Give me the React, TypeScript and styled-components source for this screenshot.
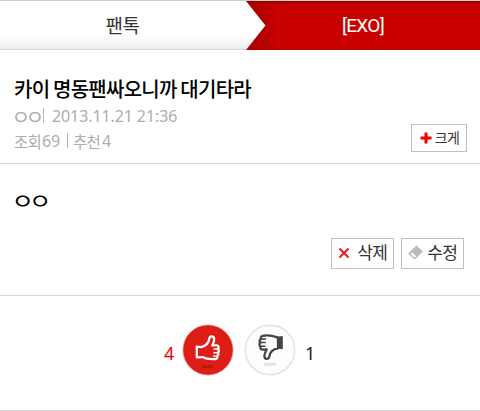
import styled, { createGlobalStyle } from 'styled-components';

const colors = {
  red: '#c90000',
  accent: '#f00000',
  text: '#333',
  muted: '#adadad',
  line: '#d6d6d6',
  border: '#c0c0c0',
};

const GlobalStyle = createGlobalStyle`
  * {
    box-sizing: border-box;
  }

  body {
    margin: 0;
    background: #fff;
    color: ${colors.text};
    font-family: 'Noto Sans', 'Noto Sans CJK KR', sans-serif;
  }
`;

const Page = styled.main`
  display: flex;
  flex-direction: column;
  width: 480px;
  height: 411px;
  overflow: hidden;
`;

const Tabs = styled.nav`
  position: relative;
  display: grid;
  grid-template-columns: 246px 1fr;
  height: 50px;
  border-top: 1px solid #cfcfcf;
  background: #fff;
`;

const Tab = styled.div<{ $active?: boolean }>`
  display: flex;
  align-items: center;
  justify-content: center;
  padding-bottom: ${({ $active }) => ($active ? '0' : '2px')};
  padding-right: ${({ $active }) => ($active ? '0' : '1px')};
  font-family: ${({ $active }) => ($active ? 'Roboto' : "'Noto Sans CJK KR'")}, sans-serif;
  font-size: 19px;
  letter-spacing: ${({ $active }) => ($active ? '-0.7px' : '-0.6px')};
  color: ${({ $active }) => ($active ? '#fff' : colors.text)};
  background: ${({ $active }) =>
    $active
      ? `linear-gradient(#8a0000, rgba(201, 0, 0, 0) 3px), linear-gradient(90deg, #a80000, ${colors.red} 34px)`
      : 'linear-gradient(#fff 70%, #eee)'};
  border-bottom: 1px solid ${({ $active }) => ($active ? '#b80000' : '#d4d8d8')};
`;

const Arrow = styled.svg`
  position: absolute;
  left: 245px;
  top: 0;
`;

const Head = styled.header`
  display: flex;
  justify-content: space-between;
  align-items: flex-end;
  height: 114px;
  padding: 0 13px 11px 14px;
  border-bottom: 1px solid ${colors.line};
`;

const Summary = styled.div`
  margin-bottom: -1px;
`;

const Title = styled.h1`
  margin: 0;
  font-family: 'Noto Sans CJK KR', sans-serif;
  font-size: 20px;
  font-weight: 500;
  line-height: 28px;
  letter-spacing: -0.75px;
  color: #000;
  white-space: nowrap;
`;

const Meta = styled.div`
  display: flex;
  align-items: center;
  height: 25px;
  font-size: 16px;
  letter-spacing: -0.1px;
  color: ${colors.muted};
  white-space: nowrap;
`;

const Label = styled.span<{ $gap?: number }>`
  margin-right: ${({ $gap = 0 }) => $gap}px;
  font-family: 'Noto Sans CJK KR', sans-serif;
  font-size: 15.5px;
  letter-spacing: -0.8px;
`;

// The jamo circles are drawn larger than the font's own
const Jamo = styled.span<{ $width: number }>`
  display: inline-block;
  width: ${({ $width }) => $width}px;
  transform: scale(1.28, 1.12);
  transform-origin: 0 58%;
  font-family: 'Noto Sans CJK KR', sans-serif;
  letter-spacing: -3.8px;
  text-indent: -2px;
  white-space: nowrap;
`;

const Bar = styled.i<{ $gap: string }>`
  width: 1px;
  height: 15px;
  margin: ${({ $gap }) => $gap};
  background: #b4b4b4;
`;

const Button = styled.button<{ $width: number; $small?: boolean }>`
  display: flex;
  align-items: center;
  justify-content: space-between;
  width: ${({ $width }) => $width}px;
  height: ${({ $small }) => ($small ? 28 : 31)}px;
  padding: ${({ $small }) => ($small ? '0 7px 1px 8px' : '0 6px 2px 6px')};
  border: 1px solid ${colors.border};
  background: #fff;
  color: ${colors.text};
  font-family: 'Noto Sans CJK KR', sans-serif;
  font-size: ${({ $small }) => ($small ? 14 : 17)}px;
  letter-spacing: -0.8px;
  line-height: 1;
  white-space: nowrap;
`;

const ButtonText = styled.span`
  margin-top: -2px;
`;

const Body = styled.article`
  display: flex;
  flex-direction: column;
  justify-content: space-between;
  height: 132px;
  padding: 21px 16px 26px 14px;
  border-bottom: 1px solid ${colors.line};
`;

const Content = styled.p`
  margin: 0;
  font-size: 19px;
  line-height: 30px;
  color: #000;
`;

const Actions = styled.div`
  display: flex;
  justify-content: flex-end;
  gap: 7px;
`;

const Votes = styled.section`
  display: flex;
  align-items: center;
  height: 115px;
  padding: 0 0 7px 164px;
  border-bottom: 1px solid ${colors.line};
`;

const Count = styled.span<{ $up?: boolean }>`
  width: ${({ $up }) => ($up ? 18 : 10)}px;
  margin-left: ${({ $up }) => ($up ? 0 : -1)}px;
  padding-top: 7px;
  font-size: 18px;
  color: ${({ $up }) => ($up ? colors.accent : '#222')};
`;

const VoteIcon = styled.svg`
  flex: none;
  width: 52px;
  height: 52px;
  margin-right: 10px;
`;

const PlusIcon = () => (
  <svg width="12" height="12" viewBox="0 0 12 12">
    <path d="M6 .5v11M.5 6h11" stroke="#f00000" strokeWidth="3" />
  </svg>
);

const CrossIcon = () => (
  <svg width="12" height="12" viewBox="0 0 12 12">
    <path d="M1.5 1.5l9 9M10.5 1.5l-9 9" stroke="#ee2020" strokeWidth="2.2" />
  </svg>
);

const EraserIcon = () => (
  <svg width="16" height="16" viewBox="0 0 16 16">
    <path d="M8.4.6l6.6 5.8-8.2 8.2L.2 8.6z" fill="#b9b9b9" />
    <path d="M4.2 7.4l3.9 3.8-1.5 1.5-3.8-3.8z" fill="#fff" />
  </svg>
);

const ThumbUp = () => (
  <VoteIcon viewBox="0 0 52 52">
    <circle cx="26" cy="26" r="25.2" fill="#dc1e17" stroke="#ecc4c2" strokeWidth=".8" />
    <path
      d="M14.8 22.6l4.5.6c4-1.2 7.6-4.5 8.1-8.8.4-2.9 4.4-2.6 4.8.4.3 2.8-1.2 4.8-1.8 6.5h4.4c2.2.2 2.5 2.9.7 3.7 1.8.6 1.8 3.2 0 3.7 1.5.8 1.1 3-.6 3.4 1 1.1.2 2.8-1.6 2.9-4.9.5-9 .3-12.8-1.9l-5.7.2z"
      fill="none"
      stroke="#fff"
      strokeWidth="2.3"
      strokeLinejoin="round"
    />
    <path d="M31.5 25h3.8M31.5 28.7h3.8M31 32.1h3.2" stroke="#fff" strokeWidth="1.4" />
    <rect x="20" y="41.5" width="11" height="2.5" rx="1" fill="#b91611" />
  </VoteIcon>
);

const ThumbDown = () => (
  <VoteIcon viewBox="0 0 52 52">
    <circle cx="26" cy="26" r="24.7" fill="#fdfdfd" stroke="#e1e2e1" strokeWidth="1.4" />
    <path
      d="M34 13.6c-5.2-1.9-10.8-2.9-15.2-1.8-2 .5-2.5 2.1-1.5 3.1-2 .5-2.3 2.8-.8 3.7-1.7.9-1.4 3.2.3 3.7-1 1.4-.2 3.4 1.8 3.3l4-.2c-.9 2.5-2.6 4.7-2.2 7.4.5 2.9 4.4 2.7 4.9-.2.8-4.6 4.4-7.7 8.7-8.2z"
      fill="none"
      stroke="#444"
      strokeWidth="2.3"
      strokeLinejoin="round"
    />
    <path d="M17.6 15h4.5M17 18.6h4.7M17.2 22.3h4.3" stroke="#444" strokeWidth="1.5" />
    <path d="M33 12.8l5.8-.8v13.2l-5.8-.8z" fill="#444" />
    <rect x="20" y="38.8" width="12" height="3" rx="1.5" fill="#e2e2e2" />
  </VoteIcon>
);

export default function App() {
  return (
    <>
      <GlobalStyle />
      <Page>
        <Tabs>
          <Tab>팬톡</Tab>
          <Tab $active>[EXO]</Tab>
          <Arrow width="24" height="49" viewBox="0 0 24 49">
            <defs>
              <linearGradient id="fold" x1="0" y1="0" x2="0" y2="1">
                <stop offset=".7" stopColor="#fff" />
                <stop offset="1" stopColor="#eee" />
              </linearGradient>
            </defs>
            <path d="M1 0l21 24.5L1 49z" fill="#8b0000" opacity=".7" />
            <path d="M0 0h1l19.5 24.5L1 49H0z" fill="url(#fold)" />
          </Arrow>
        </Tabs>
        <Head>
          <Summary>
            <Title>카이 명동팬싸오니까 대기타라</Title>
            <Meta>
              <Jamo $width={26}>ㅇㅇ</Jamo>
              <Bar $gap="0 8px 0 3px" />
              2013.11.21 21:36
            </Meta>
            <Meta>
              <Label $gap={1}>조회</Label>69
              <Bar $gap="0 5px 0 7px" />
              <Label $gap={2}>추천</Label>4
            </Meta>
          </Summary>
          <Button $width={56} $small>
            <PlusIcon />
            <ButtonText>크게</ButtonText>
          </Button>
        </Head>
        <Body>
          <Content>
            <Jamo $width={40}>ㅇㅇ</Jamo>
          </Content>
          <Actions>
            <Button $width={63}>
              <CrossIcon />
              <ButtonText>삭제</ButtonText>
            </Button>
            <Button $width={63}>
              <EraserIcon />
              <ButtonText>수정</ButtonText>
            </Button>
          </Actions>
        </Body>
        <Votes>
          <Count $up>4</Count>
          <ThumbUp />
          <ThumbDown />
          <Count>1</Count>
        </Votes>
      </Page>
    </>
  );
}
